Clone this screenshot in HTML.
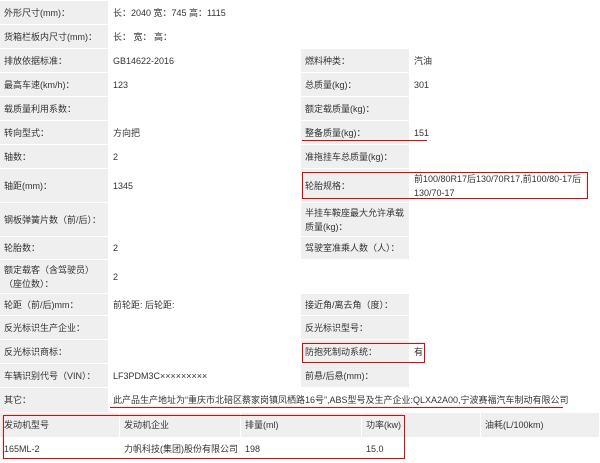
<!DOCTYPE html><html><head><meta charset="utf-8"><style>
body{margin:0;width:600px;height:463px;background:#fff;position:relative;overflow:hidden;font-family:"Liberation Sans","Noto Sans CJK SC",sans-serif;font-size:9px;color:#333}
.c{position:absolute;box-sizing:border-box;padding-left:4px;display:flex;align-items:center;line-height:14px;white-space:nowrap;overflow:hidden}
.g{background:#efefef}
.r{position:absolute;border:1px solid #e00}
.u{position:absolute;height:1px;background:#e00}
</style></head><body>
<div id="t"></div>
<script>
var rows=[[0,24],[24,48],[48,72],[72,96],[96,120],[120,144],[144,168],[168,202],[202,236],[236,259],[259,293],[293,315],[315,339],[339,363],[363,387],[387,412]];
var d=[
["外形尺寸(mm)：","长：2040 宽：745 高：1115"],
["货箱栏板内尺寸(mm)：","长：&nbsp;宽：&nbsp;高："],
["排放依据标准：","GB14622-2016","燃料种类：","汽油"],
["最高车速(km/h)：","123","总质量(kg)：","301"],
["载质量利用系数：","","额定载质量(kg)：",""],
["转向型式：","方向把","整备质量(kg)：","151"],
["轴数：","2","准拖挂车总质量(kg)：",""],
["轴距(mm)：","1345","轮胎规格：","前100/80R17后130/70R17,前100/80-17后<br>130/70-17"],
["钢板弹簧片数（前/后）：","","半挂车鞍座最大允许承载<br>质量(kg)：",""],
["轮胎数：","2","驾驶室准乘人数（人）：",""],
["额定载客（含驾驶员）<br>（座位数）：","2"],
["轮距（前/后)mm：","前轮距: 后轮距:","接近角/离去角（度）：",""],
["反光标识生产企业：","","反光标识型号：",""],
["反光标识商标：","","防抱死制动系统：","有"],
["车辆识别代号（VIN）：","LF3PDM3C×××××××××","前悬/后悬(mm)：",""],
["其它：","此产品生产地址为“重庆市北碚区蔡家岗镇凤栖路16号”,ABS型号及生产企业:QLXA2A00,宁波赛福汽车制动有限公司"]];
var h="";
function cell(x,y,w,hh,g,txt){h+='<div class="c'+(g?' g':'')+'" style="left:'+x+'px;top:'+y+'px;width:'+w+'px;height:'+hh+'px;"><span>'+txt+'</span></div>';}
d.forEach(function(r,i){var y=rows[i][0]+1,hh=rows[i][1]-rows[i][0]-1;
cell(0,y,108,hh,1,r[0]);
if(r.length==2){cell(109,y,491,hh,0,r[1]);}else{cell(109,y,191,hh,0,r[1]);cell(301,y,108,hh,1,r[2]);cell(410,y,190,hh,0,r[3]);}
});
var cx=[0,120,241,362,481,600],hd=["发动机型号","发动机企业","排量(ml)","功率(kw)","油耗(L/100km)"],dv=["165ML-2","力帆科技(集团)股份有限公司","198","15.0",""];
for(var i=0;i<5;i++){cell(cx[i],413,cx[i+1]-cx[i]-1,24,1,hd[i]);cell(cx[i],438,cx[i+1]-cx[i]-1,22,0,dv[i]);}
document.getElementById("t").innerHTML=h;
</script>
<div class="u" style="left:302px;top:140px;width:125px"></div>
<div class="r" style="left:302px;top:172px;width:284px;height:25px"></div>
<div class="r" style="left:302px;top:343px;width:121px;height:18px"></div>
<div class="u" style="left:110px;top:407px;width:453px"></div>
<div class="r" style="left:3px;top:415px;width:400px;height:42px"></div>
</body></html>
